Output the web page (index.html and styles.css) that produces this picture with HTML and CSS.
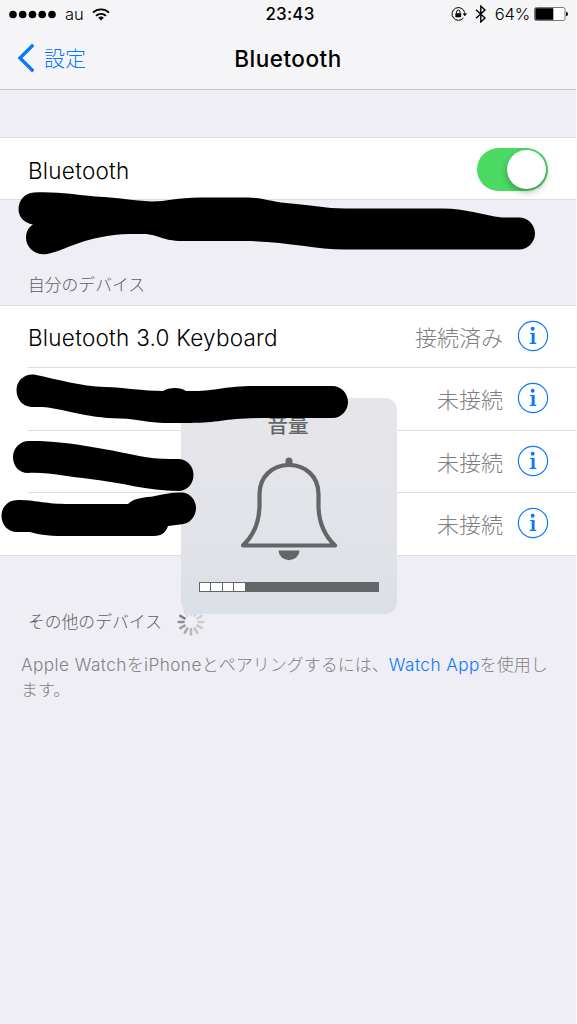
FILE: index.html
```
<!DOCTYPE html>
<html lang="ja">
	<head>
		<meta charset="utf-8">
		<title>Bluetooth</title>
		<link rel="stylesheet" href="styles.css">
	</head>
	<body>
		<div class="phone">
			<div class="status">
				<div class="status-left">
					<svg class="signal" width="48" height="9" viewBox="0 0 48 9">
						<circle cx="4" cy="4.5" r="3.8"/><circle cx="13.7" cy="4.5" r="3.8"/><circle cx="23.5" cy="4.5" r="3.8"/><circle cx="33.2" cy="4.5" r="3.8"/><circle cx="43" cy="4.5" r="3.8"/>
					</svg>
					<span class="carrier">au</span>
					<svg class="wifi" width="18" height="13" viewBox="0 0 18 13">
						<path d="M1 4.6a11.5 11.5 0 0 1 16 0M4 7.9a7.2 7.2 0 0 1 10 0" fill="none" stroke="#000" stroke-width="1.8"/>
						<path d="M6.2 9.8a4.2 4.2 0 0 1 5.6 0L9 12.6z"/>
					</svg>
				</div>
				<div class="clock">23:43</div>
				<div class="status-right">
					<svg class="lock" width="17" height="14" viewBox="0 0 17 14">
						<path d="M13.6 5.2A6.4 6.4 0 1 0 12.4 11M13.7 5.4v2" fill="none" stroke="#000" stroke-width="1"/>
						<path d="M11.5 6.6h4.6l-2.3 2.7zM4.4 6.3h5.8v4H4.4z"/>
						<path d="M5.6 6.4V4.8a1.7 1.7 0 0 1 3.4 0v1.6" fill="none" stroke="#000" stroke-width="1"/>
					</svg>
					<svg class="bt" width="12" height="18" viewBox="0 0 12 18">
						<path d="M1 4.8l9 8.2-4.2 3.9V1.1L10 5l-9 8.2" fill="none" stroke="#000" stroke-width="1.4"/>
					</svg>
					<span class="percent">64%</span>
					<svg class="battery" width="34" height="14" viewBox="0 0 34 14">
						<rect x=".5" y=".5" width="30.5" height="13" rx="1.8" fill="#fff" stroke="#777"/>
						<rect x="1.3" y="1.2" width="18" height="11.6"/>
						<path d="M32 4.8q2 .2 2 2.2t-2 2.2z"/>
					</svg>
				</div>
			</div>

			<div class="nav">
				<a class="back">
					<svg width="18" height="30" viewBox="0 0 18 30"><path d="M17.3 1.8L4 15l13.3 13.2" fill="none" stroke="#0b79fe" stroke-width="3.4"/></svg>
					<span>設定</span>
				</a>
				<h1 class="title">Bluetooth</h1>
			</div>

			<div class="list power">
				<div class="row">
					<span class="name">Bluetooth</span>
					<span class="switch"><span class="knob"></span></span>
				</div>
			</div>

			<h2 class="heading mine">自分のデバイス</h2>
			<div class="list">
				<div class="row">
					<span class="name">Bluetooth 3.0 Keyboard</span>
					<span class="state">接続済み</span>
					<svg class="info" width="32" height="32" viewBox="0 0 32 32"><use href="#info"/></svg>
				</div>
				<div class="row">
					<span class="name"></span>
					<span class="state">未接続</span>
					<svg class="info" width="32" height="32" viewBox="0 0 32 32"><use href="#info"/></svg>
				</div>
				<div class="row">
					<span class="name"></span>
					<span class="state">未接続</span>
					<svg class="info" width="32" height="32" viewBox="0 0 32 32"><use href="#info"/></svg>
				</div>
				<div class="row">
					<span class="name"></span>
					<span class="state">未接続</span>
					<svg class="info" width="32" height="32" viewBox="0 0 32 32"><use href="#info"/></svg>
				</div>
			</div>

			<h2 class="heading other">
				<span>その他のデバイス</span>
				<svg class="spinner" width="28" height="28" viewBox="-14 -14 28 28" stroke-width="2.6" stroke-linecap="round">
					<path d="M0-7.4V-12.4" stroke="#d8d8dc"/>
					<path d="M0-7.4V-12.4" stroke="#d5d5d9" transform="rotate(30)"/>
					<path d="M0-7.4V-12.4" stroke="#d2d2d6" transform="rotate(60)"/>
					<path d="M0-7.4V-12.4" stroke="#cfcfd3" transform="rotate(90)"/>
					<path d="M0-7.4V-12.4" stroke="#cacace" transform="rotate(120)"/>
					<path d="M0-7.4V-12.4" stroke="#c2c2c6" transform="rotate(150)"/>
					<path d="M0-7.4V-12.4" stroke="#b8b8bc" transform="rotate(180)"/>
					<path d="M0-7.4V-12.4" stroke="#adadb1" transform="rotate(210)"/>
					<path d="M0-7.4V-12.4" stroke="#9f9fa3" transform="rotate(240)"/>
					<path d="M0-7.4V-12.4" stroke="#8e8e92" transform="rotate(270)"/>
					<path d="M0-7.4V-12.4" stroke="#828286" transform="rotate(300)"/>
					<path d="M0-7.4V-12.4" stroke="#d8d8dc" transform="rotate(330)"/>
				</svg>
			</h2>
			<p class="note"><span class="latin">Apple Watch</span>を<span class="latin">iPhone</span>とペアリングするには、<a class="latin link">Watch App</a>を使用し<br>ます。</p>

			<div class="hud">
				<div class="hud-title">音量</div>
				<svg class="bell" width="98" height="104" viewBox="0 0 98 104">
					<path d="M45.5 7V4a3.5 3.5 0 0 1 7 0v3z"/>
					<path d="M3 88.5C13 79 19.5 67 19.5 48V37C19.5 20 32 8 49 8S78.5 20 78.5 37V48C78.5 67 85 79 95 88.5Z" fill="none" stroke="#636569" stroke-width="4.2" stroke-linejoin="round"/>
					<path d="M38.5 93.5h21a10.5 9.7 0 0 1-21 0z"/>
				</svg>
				<div class="level"><i></i><i></i><i></i><i></i></div>
			</div>

			<!-- marker strokes over the private names -->
			<svg class="marker" width="576" height="1024" viewBox="0 0 576 1024">
				<path d="M33 224.5C24 223 18.5 217 18.5 209C18.5 200 25 193 34 192.5C60 191.5 75 195 95 196.5C120 197.5 140 201.5 153 201.5C165 201.5 178 197.5 200 197.5H248C262 197.5 275 203 291 203.5C312 205 325 208.5 345 208.5H443C465 208.5 482 215 502 217.5H519C528 217.5 535 225 535 233.5S528 249.5 519 249.5H345C315 249.5 285 241 245 241H182C163 241 157 234 143 234H130C85 235 65 251 47 254C36 256 26 248 26 238C26 231 29 227 33 224.5Z"/>
				<path d="M31 407C22 406 16.5 399 16.5 390C16.5 381 24 373.5 34 374.5C60 380 80 386 105 387C125 387.5 142 391 163 391C169 387 181 387 186 391H195C215 391 225 386 255 386H332C342 386 348 394 348 402S342 418 332 418H265C225 418 220 423 190 423H165C148 423 140 419 120 418.5C85 418 62 408 42 407Z"/>
				<path d="M28 473C19 473 13 466 13 457S20 441 29 441C65 440 115 451 145 457C157 459 168 459 178 459C187 459 193.5 466 193.5 475S187 491 178 491C148 491 120 482 90 479C68 477 50 472 28 473Z"/>
				<path d="M17 532C8 532 1.5 525 1.5 516S8 500 18 500C35 500 43 503.5 65 504H128C135 497 145 498 155 496C165 494 172 492.5 181 492.5C190 492.5 196 500 196 508S190 524.5 180 524.5L168 526C166 532 162 536 154 536H65C45 536 37 534 30 532Z"/>
			</svg>
		</div>

		<svg class="defs" width="0" height="0">
			<symbol id="info" viewBox="0 0 32 32">
				<circle cx="16" cy="16" r="14.6" fill="none" stroke="#0b79fe" stroke-width="1.2"/>
				<circle cx="15.7" cy="8.8" r="2" fill="#0b79fe"/>
				<path d="M12.9 12.9h4.7v9.9h1.7v1.1h-6.5v-1.1h1.9v-8.7h-1.8z" fill="#0b79fe"/>
			</symbol>
		</svg>
	</body>
</html>
```
FILE: styles.css
```
*             { box-sizing: border-box; margin: 0; padding: 0; }
body          { background: #fff; font-family: Inter, "Noto Sans CJK JP", sans-serif; color: #000; }
.phone        { position: relative; width: 576px; height: 1024px; background: #efeef4; overflow: hidden; }

.status       { display: grid; grid-template-columns: 1fr auto 1fr; align-items: center; height: 28px; padding: 0 8px 0 9px; background: #f5f5f7; }
.status-left,
.status-right { display: flex; align-items: center; }
.status-right { justify-content: flex-end; }
.carrier      { margin-left: 8px; font-size: 16.5px; font-weight: 300; }
.wifi         { margin-left: 8px; }
.clock        { padding-left: 3px; font-size: 17px; font-weight: 500; letter-spacing: 0.2px; }
.lock         { margin-right: 1px; }
.bt           { margin-left: 6px; }
.percent      { margin: 0 4px 0 8px; font-size: 16.5px; font-weight: 300; letter-spacing: -0.2px; }

.nav          { display: grid; grid-template-columns: 1fr auto 1fr; align-items: center; height: 62px; padding: 0 16px; background: #f5f5f7; border-bottom: 1px solid #c9c9cd; }
.back         { display: flex; align-items: center; gap: 10px; color: #0b79fe; font-size: 21px; font-weight: 300; padding-bottom: 3px; }
.back svg     { position: relative; top: 1px; }
.title        { font-size: 22.5px; font-weight: 500; letter-spacing: 0.5px; }

.list         { background: #fff; border-top: 1px solid #dcdce1; border-bottom: 1px solid #dcdce1; }
.power        { margin-top: 47px; }
.row          { display: flex; align-items: center; height: 62.5px; margin-left: 28px; padding: 0 27px 1px 0; }
.row:first-child { height: 61px; }
.power .row:first-child { padding: 1px 28px 0 0; }
.row + .row   { border-top: 1px solid #dedee2; }
.name         { flex: 1; font-size: 22.5px; font-weight: 300; letter-spacing: 0.25px; padding-top: 2px; }
.state        { margin-right: 14px; font-size: 22px; font-weight: 300; color: #7f7f83; }
.switch       { width: 71px; height: 43px; padding: 2px; border-radius: 22px; background: #4cd964; }
.knob         { display: block; width: 39px; height: 39px; margin-left: 28px; border-radius: 50%; background: #fff; box-shadow: 0 3px 6px rgba(0, 0, 0, 0.3); }

.heading      { display: flex; align-items: center; font-size: 16.8px; font-weight: 300; color: #5c5c61; padding-left: 28px; }
.mine         { height: 105px; padding-top: 63px; }
.other        { height: 40px; margin-top: 45px; }
.spinner      { position: relative; top: 1px; margin-left: 15px; }
.note         { padding-left: 21px; font-size: 17px; font-weight: 300; line-height: 25px; color: #818186; margin-top: 11px; white-space: nowrap; }
.latin        { font-size: 17.2px; letter-spacing: 0.45px; }
.link         { color: #0b79fe; }

.hud          { position: absolute; left: 181px; top: 398px; width: 216px; height: 216px; padding: 13px 18px 0; border-radius: 12px; background: linear-gradient(#e5e5ea 0%, #e3e4e9 55%, #dbdfe7 100%); display: flex; flex-direction: column; align-items: center; }
.hud-title    { position: relative; left: -1px; font-size: 20.5px; line-height: 30px; font-weight: 500; color: #636569; }
.bell         { margin-top: 16px; fill: #636569; }
.level        { display: flex; gap: 1px; width: 180px; height: 10px; margin-top: 21px; padding: 1px; background: #636569; }
.level i      { width: 10.4px; background: #fff; }

.marker       { position: absolute; left: 0; top: 0; }
.defs         { position: absolute; }
```
